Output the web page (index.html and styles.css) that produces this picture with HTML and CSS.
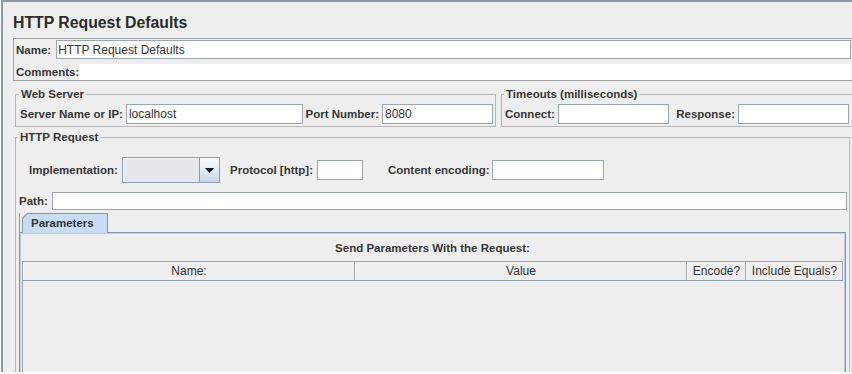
FILE: index.html
```html
<!DOCTYPE html>
<html>
  <head>
    <title>HTTP Request Defaults</title>
    <meta name="viewport" content="width=device-width, initial-scale=1.0" />
    <link rel="stylesheet" href="styles.css">
  </head>
  <body>
    <div class="frame">
      <h1 class="title">HTTP Request Defaults</h1>

      <div class="name-panel">
        <div class="row">
          <span class="label">Name:</span>
          <input class="field name-field" type="text" value="HTTP Request Defaults" />
        </div>
        <div class="row comments-row">
          <span class="label">Comments:</span>
          <div class="comments"></div>
        </div>
      </div>

      <div class="server-row">
        <fieldset class="group web-server">
          <legend>Web Server</legend>
          <div class="row">
            <span class="label">Server Name or IP:</span>
            <input class="field grow" type="text" value="localhost" />
            <span class="label">Port Number:</span>
            <input class="field port" type="text" value="8080" />
          </div>
        </fieldset>
        <fieldset class="group timeouts">
          <legend>Timeouts (milliseconds)</legend>
          <div class="row">
            <span class="label">Connect:</span>
            <input class="field grow" type="text" value="" />
            <span class="label response-label">Response:</span>
            <input class="field timeout" type="text" value="" />
          </div>
        </fieldset>
      </div>

      <fieldset class="group http-request">
        <legend>HTTP Request</legend>
        <div class="row impl-row">
          <span class="label impl-label">Implementation:</span>
          <div class="combo">
            <div class="combo-value"></div>
            <div class="combo-btn">
              <svg width="9" height="5" viewBox="0 0 9 5"><polygon points="0,0 9,0 4.5,5" fill="#111" /></svg>
            </div>
          </div>
          <span class="label proto-label">Protocol [http]:</span>
          <input class="field protocol" type="text" value="" />
          <span class="label enc-label">Content encoding:</span>
          <input class="field encoding" type="text" value="" />
        </div>
        <div class="row path-row">
          <span class="label">Path:</span>
          <input class="field grow path" type="text" value="" />
        </div>

        <div class="tab-strip">
          <div class="tab"><span>Parameters</span></div>
        </div>
        <div class="tab-panel">
          <div class="params-title">Send Parameters With the Request:</div>
          <div class="table">
            <div class="thead">
              <div class="th">Name:</div>
              <div class="th">Value</div>
              <div class="th">Encode?</div>
              <div class="th">Include Equals?</div>
            </div>
            <div class="tbody"></div>
          </div>
        </div>
      </fieldset>
    </div>
  </body>
</html>
```

FILE: styles.css
```css
body {
  margin: 0;
  background: #fff;
  height: 374px;
  overflow: hidden;
  font-family: "Liberation Sans", Arial, sans-serif;
  font-size: 12px;
  color: #333;
}

.frame {
  box-sizing: border-box;
  width: 852px;
  height: 372px;
  margin-left: 1px;
  padding-left: 10px;
  border-left: 2px solid #8c98a5;
  border-top: 2px solid #8c98a5;
  background: #eeeeee;
  overflow: hidden;
}

.title {
  margin: 12px 0 6px;
  font-size: 15.8px;
  line-height: 18px;
  font-weight: bold;
  color: #2b2b2b;
}

.row {
  display: flex;
  align-items: center;
}

.label {
  font-weight: bold;
  font-size: 11.5px;
  line-height: 14px;
  white-space: nowrap;
  color: #363636;
}

.field {
  box-sizing: border-box;
  height: 20px;
  margin: 0;
  padding: 0 2px;
  border: 1px solid #9ba5af;
  background: #fff;
  font-family: "Liberation Sans", Arial, sans-serif;
  font-size: 12px;
  color: #333;
  outline: none;
}

.grow {
  flex: 1;
  min-width: 0;
}

/* Name / comments */
.name-panel {
  display: flex;
  flex-direction: column;
  gap: 5px;
  padding: 1px 1px 0 2px;
  border: 1px solid #a2a2a2;
}

.name-field {
  flex: 1;
  height: 19px;
  margin-left: 5px;
  padding-left: 1px;
}

.comments-row {
  height: 16px;
}

.comments {
  flex: 1;
  height: 16px;
  background: #fff;
}

/* Titled groups */
fieldset.group {
  box-sizing: border-box;
  min-width: 0;
  margin: 0;
  border: 1px solid #b6b6b6;
}

fieldset.group legend {
  padding: 0 2px;
  margin-left: -1px;
  font-weight: bold;
  font-size: 11.5px;
  line-height: 14px;
  color: #363636;
}

.server-row {
  display: flex;
  gap: 5px;
  margin: 6px 0 0 2px;
}

.web-server {
  width: 481px;
  padding: 3px 2px 2px 4px;
}

.web-server .row,
.timeouts .row {
  gap: 3px;
}

.port {
  width: 111px;
}

.timeouts {
  flex: 1;
  padding: 3px 3px 2px 3px;
}

.timeouts legend {
  margin-left: 1px;
}

.response-label {
  margin-left: 4px;
}

.timeout {
  width: 111px;
}

/* HTTP Request */
.http-request {
  height: 400px;
  margin: 3px 3px 0 2px !important;
  padding: 13px 2px 0 3px;
}

.http-request legend {
  margin-left: 0;
}

.impl-row {
  padding-left: 10px;
  height: 26px;
}

.impl-label {
  width: 93px;
}

.combo {
  box-sizing: border-box;
  display: flex;
  width: 98px;
  height: 26px;
  border: 1px solid #8c9cae;
  background: #e4e8ed;
}

.combo-value {
  flex: 1;
  border-top: 1px solid #f4f6f9;
  border-left: 1px solid #f4f6f9;
}

.combo-btn {
  width: 19px;
  display: flex;
  align-items: center;
  justify-content: center;
  border-left: 1px solid #8c9cae;
  background: linear-gradient(#fbfcfd, #c6d6e7);
}

.proto-label {
  margin-left: 10px;
  width: 87px;
}

.protocol {
  width: 46px;
}

.enc-label {
  margin-left: 25px;
  width: 104px;
}

.encoding {
  width: 112px;
}

.path-row {
  margin-top: 9px;
}

.path {
  height: 18px;
  margin-left: 4px;
}

/* Tabs */
.tab-strip {
  display: flex;
  height: 20px;
  margin-top: 3px;
}

.tab-strip::before,
.tab-strip::after {
  content: "";
  box-sizing: border-box;
  border-bottom: 1px solid #8296b4;
}

.tab-strip::before {
  width: 3px;
  border-left: 1px solid #8296b4;
}

.tab-strip::after {
  flex: 1;
  margin-right: 1px;
}

.tab {
  box-sizing: border-box;
  width: 86px;
  height: 20px;
  padding: 1px 1px 0 1px;
  background: #8296b4;
  clip-path: polygon(5px 0, 100% 0, 100% 100%, 0 100%, 0 5px);
}

.tab span {
  display: block;
  height: 100%;
  padding-left: 8px;
  background: #c8dcf3;
  clip-path: polygon(4.5px 0, 100% 0, 100% 100%, 0 100%, 0 4.5px);
  font-weight: bold;
  font-size: 11.5px;
  line-height: 18px;
  color: #333;
}

.tab-panel {
  margin-right: 1px;
  padding: 0 2px;
  border: 1px solid #8296b4;
  border-top-color: #b9cfea;
  box-shadow: inset 1px 0 #b4cbe9, inset -1px 0 #b4cbe9;
}

.params-title {
  padding: 7px 0 6px;
  text-align: center;
  font-weight: bold;
  font-size: 11.5px;
  line-height: 14px;
  color: #363636;
}

.table {
  border-left: 1px solid #a3a3a3;
}

.thead {
  box-sizing: border-box;
  display: grid;
  grid-template-columns: 1fr 1fr 59px 97px;
  height: 20px;
  border-top: 1px solid #a5a5a5;
  border-bottom: 1px solid #8b9bb0;
}

.th {
  border-left: 1px solid #fafafa;
  border-right: 1px solid #a5a5a5;
  text-align: center;
  line-height: 18px;
  white-space: nowrap;
  overflow: hidden;
  color: #333;
}

.tbody {
  height: 200px;
  background: #eeeeee;
}
```
